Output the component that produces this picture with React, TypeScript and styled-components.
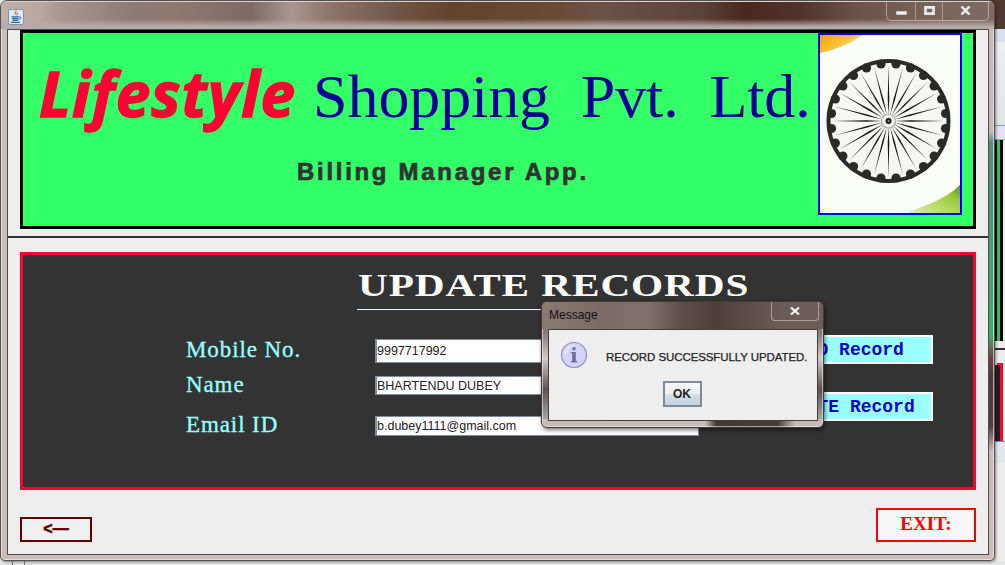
import React from "react";
import styled, { createGlobalStyle } from "styled-components";

const Global = createGlobalStyle`
  html, body { margin: 0; padding: 0; width: 1005px; height: 565px; overflow: hidden; background: #ececec; }
  #root { width: 1005px; height: 565px; }
  * { box-sizing: border-box; }
`;

const Desktop = styled.div`
  position: relative;
  width: 1005px;
  height: 565px;
  overflow: hidden;
  background: #e9e9e9;
`;

/* Parts of the window behind, seen at the right of the frontmost window */
const BehindStrip = styled.div`
  position: absolute;
  left: 989px;
  top: 0;
  width: 16px;
  height: 565px;
  display: flex;
  flex-direction: column;
`;
const Stripe = styled.div<{ $h: number; $bg: string }>`
  height: ${(p) => p.$h}px;
  flex: none;
  background: ${(p) => p.$bg};
`;
const BehindBottom = styled.div`
  position: absolute;
  left: 0;
  top: 561px;
  width: 1005px;
  height: 4px;
  background: linear-gradient(90deg, transparent 12px, #777 12px, #777 13px, transparent 13px, transparent 24px, #777 24px, #777 25px, transparent 25px), #e4e6e6;
`;

const Window = styled.div`
  position: absolute;
  left: 0;
  top: 0;
  width: 995px;
  height: 561px;
  border-radius: 7px 7px 5px 5px;
  border: 1px solid #55504e;
  box-shadow: 1px 1px 3px rgba(0, 0, 0, 0.45), inset 0 0 0 1px rgba(255, 255, 255, 0.55);
  background:
    linear-gradient(180deg, #c9b9b6 0, #c9b9b6 130px, #5f8a72 142px, #3fae68 335px, #7a3a40 358px, #4a3a38 375px, #4e3e3c 425px, #c9bab6 450px, #ccbdb9 100%) right / 6px 100% no-repeat,
    #cbbcb8;
  display: flex;
  flex-direction: column;
  overflow: hidden;
`;

const TitleBar = styled.div`
  height: 28px;
  flex: none;
  padding: 0 5px 0 7px;
  display: flex;
  align-items: flex-start;
  justify-content: space-between;
  background:
    linear-gradient(180deg, rgba(184, 170, 170, 0) 0, rgba(184, 170, 170, 0) 17px, #b9abac 25px, #b5a8a8 28px),
    linear-gradient(90deg, #c0b1a9 0, #b8a79e 40px, #a8968f 60px, #8d7b74 130px, #8f7a70 170px, #7d6a62 250px, #a8968e 290px, #8d7468 330px, #6f5546 400px, #63442a 450px, #64482f 520px, #6a4a34 550px, #6b5246 600px, #5c4238 700px, #48291c 745px, #50342d 800px, #6d5449 860px, #7a645a 930px, #7d6a61 995px);
  border-top: 1px solid #d8d2cc;
`;

const JavaIcon = styled.svg`
  width: 16px;
  height: 16px;
  margin-top: 7px;
`;

const CaptionButtons = styled.div`
  display: flex;
  height: 20px;
  width: 103px;
  margin-top: -1px;
  border: 1px solid rgba(225, 215, 210, 0.55);
  border-top: none;
  border-radius: 0 0 5px 5px;
`;
const CaptionButton = styled.div<{ $w: number }>`
  width: ${(p) => p.$w}px;
  display: flex;
  align-items: center;
  justify-content: center;
  border-left: 1px solid rgba(225, 215, 210, 0.45);
  &:first-child { border-left: none; }
`;

const Pane = styled.div`
  margin: 0 5px 0 6px;
  height: 526px;
  flex: none;
  background: #eeeeee;
  border: 1px solid #4d4d4d;
  display: flex;
  flex-direction: column;
  padding: 0 12px 0 12px;
`;

const Banner = styled.header`
  height: 199px;
  flex: none;
  border: 3px solid #000;
  background: #33ff66;
  display: flex;
  position: relative;
`;
const BannerText = styled.div`
  flex: 1;
  min-width: 0;
  display: flex;
  flex-direction: column;
  padding: 16px 0 0 16px;
`;
const BrandLine = styled.div`
  display: flex;
  align-items: baseline;
  height: 88px;
  white-space: pre;
`;
const Brand = styled.span`
  font-family: "Open Sans", sans-serif;
  font-style: italic;
  font-weight: 700;
  font-size: 62px;
  letter-spacing: 1px;
  line-height: 88px;
  color: #ff0033;
  margin-right: 17px;
  -webkit-text-stroke: 1.4px #ff0033;
`;
const Company = styled.span`
  font-family: "Liberation Serif", serif;
  font-size: 62px;
  letter-spacing: -0.1px;
  line-height: 88px;
  color: #000099;
`;
const AppName = styled.div`
  font-family: "Liberation Sans", sans-serif;
  font-weight: 700;
  font-size: 24px;
  letter-spacing: 2.7px;
  color: #333333;
  margin: 21px 0 0 258px;
  line-height: 28px;
  -webkit-text-stroke: 0.7px #333333;
`;
const Emblem = styled.svg`
  width: 144px;
  height: 182px;
  flex: none;
  margin: 0 11px 0 0;
  border: 2px solid #0000ee;
  display: block;
`;

const Separator = styled.hr`
  height: 2px;
  border: none;
  background: #333;
  margin: 7px -12px 14px -12px;
  flex: none;
`;

const Panel = styled.section`
  height: 238px;
  flex: none;
  border: 3px solid #ff0033;
  background: #333333;
  display: flex;
  flex-direction: column;
`;
const PanelTitle = styled.h1`
  margin: 13px 0 0 334px;
  width: 388px;
  height: 42px;
  border-bottom: 1px solid #e8f0ff;
  font-family: "Liberation Serif", serif;
  font-weight: 700;
  font-size: 31px;
  line-height: 36px;
  color: #ffffff;
  white-space: nowrap;
`;
const PanelTitleText = styled.span`
  display: inline-block;
  transform: scaleX(1.33);
  transform-origin: left center;
  margin-left: 1px;
  letter-spacing: 0.7px;
`;

const FormArea = styled.div`
  display: flex;
  padding-left: 163px;
  margin-top: 29px;
`;
const FieldRows = styled.div`
  width: 513px;
  flex: none;
  display: flex;
  flex-direction: column;
`;
const FieldRow = styled.div<{ $h: number; $mt: number }>`
  display: flex;
  align-items: center;
  height: ${(p) => p.$h}px;
  margin-top: ${(p) => p.$mt}px;
`;
const Label = styled.label`
  width: 189px;
  flex: none;
  padding-bottom: 2px;
  font-family: "Liberation Serif", serif;
  font-size: 23px;
  letter-spacing: 0.9px;
  -webkit-text-stroke: 0.3px #99ffff;
  color: #99ffff;
  white-space: nowrap;
`;
const Field = styled.div`
  width: 324px;
  height: 100%;
  flex: none;
  display: flex;
  align-items: center;
  padding-left: 0;
  background: #fff;
  border: 1px solid #7d8ea0;
  border-width: 1px 1px 1px 2px;
  font-family: "Liberation Sans", sans-serif;
  font-size: 12.5px;
  color: #222;
  white-space: nowrap;
`;
const Actions = styled.div`
  margin: -4px 0 0 57px;
  display: flex;
  flex-direction: column;
  gap: 28px;
`;
const ActionButton = styled.button`
  width: 177px;
  height: 29px;
  padding: 1px 0 0;
  border: 2px solid #ffffff;
  background: #99ffff;
  font-family: "Liberation Mono", monospace;
  font-weight: 700;
  font-size: 18px;
  color: #0000cc;
  white-space: nowrap;
`;

const Footer = styled.div`
  flex: 1;
  display: flex;
  justify-content: space-between;
  align-items: flex-end;
  padding-bottom: 12px;
`;
const BackButton = styled.button`
  width: 72px;
  height: 25px;
  padding: 0 0 2px;
  border: 2px solid #660000;
  background: #f0f0f0;
  display: flex;
  align-items: center;
  justify-content: center;
  font-family: "Liberation Sans", sans-serif;
  font-weight: 700;
  font-size: 16px;
  line-height: 18px;
  letter-spacing: 0;
  -webkit-text-stroke: 0.6px #660000;
  color: #660000;
`;
const ExitButton = styled.button`
  width: 100px;
  height: 34px;
  padding: 0 0 2px;
  border: 2px solid #ff0000;
  background: #f7f7f7;
  font-family: "Liberation Serif", serif;
  font-weight: 700;
  font-size: 19px;
  color: #ff0000;
`;

const Dialog = styled.div`
  position: absolute;
  left: 541px;
  top: 301px;
  width: 283px;
  height: 127px;
  border: 1px solid #3e3a3a;
  border-radius: 6px;
  box-shadow: 1px 2px 4px rgba(0, 0, 0, 0.55), inset 0 0 0 1px rgba(255, 255, 255, 0.5);
  background:
    linear-gradient(90deg, #c9bbb6 0, #cabcb8 58%, #443733 62%, #4a3c38 84%, #c8bab6 90%, #c8bab6 100%) bottom / 100% 8px no-repeat,
    linear-gradient(180deg, #6b5a54 0, #8a7c78 25%, #cfcac8 45%, #5c5250 70%, #b9bcbc 100%);
  display: flex;
  flex-direction: column;
  overflow: hidden;
`;
const DialogTitleBar = styled.div`
  height: 27px;
  flex: none;
  display: flex;
  justify-content: space-between;
  align-items: flex-start;
  padding: 0 4px 0 7px;
  background: linear-gradient(90deg, #8a7a70 0, #7d6c65 20%, #80706a 38%, #5d4c47 50%, #4e3d38 62%, #6c5c56 85%, #6c5d58 100%);
`;
const DialogCaption = styled.span`
  font-family: "Liberation Sans", sans-serif;
  font-size: 12px;
  line-height: 26px;
  color: #111;
`;
const DialogClose = styled.div`
  width: 48px;
  height: 19px;
  border: 1px solid rgba(225, 215, 210, 0.55);
  border-top: none;
  border-radius: 0 0 4px 4px;
  display: flex;
  align-items: center;
  justify-content: center;
`;
const DialogBody = styled.div`
  margin: 0 5px 0 6px;
  height: 92px;
  flex: none;
  background: #eeeeee;
  border: 1px solid #3e3e3e;
  display: flex;
  flex-direction: column;
`;
const MessageRow = styled.div`
  display: flex;
  align-items: flex-start;
  padding: 11px 0 0 11px;
  height: 51px;
`;
const InfoIcon = styled.svg`
  width: 28px;
  height: 28px;
  flex: none;
`;
const MessageText = styled.span`
  margin: 10px 0 0 18px;
  font-family: "Liberation Sans", sans-serif;
  font-size: 11.5px;
  letter-spacing: -0.09px;
  -webkit-text-stroke: 0.25px #222;
  color: #222;
  white-space: nowrap;
`;
const OkButton = styled.button`
  align-self: center;
  width: 39px;
  height: 26px;
  padding: 0;
  margin-left: -2px;
  border: 2px solid #7a8a9a;
  background: linear-gradient(180deg, #f4f6f8 0, #eef1f4 45%, #d4dde6 55%, #c4d2df 100%);
  font-family: "Liberation Sans", sans-serif;
  font-weight: 700;
  font-size: 12px;
  color: #222;
`;

function Chakra() {
  const cx = 68.5;
  const cy = 86;
  const spokes = Array.from({ length: 24 }, (_, i) => (i * Math.PI) / 12);
  const pt = (r: number, a: number) => `${(cx + r * Math.sin(a)).toFixed(2)},${(cy - r * Math.cos(a)).toFixed(2)}`;
  return (
    <Emblem viewBox="0 0 140 178" preserveAspectRatio="none">
      <defs>
        <linearGradient id="saffron" x1="0" y1="0" x2="1" y2="0.6">
          <stop offset="0" stopColor="#f5a400" />
          <stop offset="1" stopColor="#ffd870" />
        </linearGradient>
        <linearGradient id="leaf" x1="0" y1="1" x2="1" y2="0">
          <stop offset="0" stopColor="#dcefb0" />
          <stop offset="0.7" stopColor="#9ccb3c" />
          <stop offset="1" stopColor="#5e8f20" />
        </linearGradient>
      </defs>
      <rect width="140" height="178" fill="#fbfef6" />
      <path d="M0 0H42C30 9 15 15 0 18Z" fill="url(#saffron)" />
      <path d="M88 178C105 170 125 165 140 150V178Z" fill="url(#leaf)" />
      <circle cx={cx} cy={cy} r="62" fill="#2a2a28" />
      <circle cx={cx} cy={cy} r="58" fill="#f6f7f4" />
      {spokes.map((a, i) => {
        const m = a + Math.PI / 24;
        const [x, y] = pt(57.5, m).split(",");
        return <circle key={`b${i}`} cx={x} cy={y} r="4.6" fill="#2a2a28" />;
      })}
      {spokes.map((a, i) => (
        <polygon
          key={`s${i}`}
          points={`${pt(6, a)} ${pt(22, a - 0.035)} ${pt(56, a)} ${pt(22, a + 0.035)}`}
          fill="#141414"
        />
      ))}
      <circle cx={cx} cy={cy} r="7" fill="none" stroke="#a4a4a2" strokeWidth="1.2" />
      <circle cx={cx} cy={cy} r="5" fill="#f4f5f2" />
      <circle cx={cx} cy={cy} r="3" fill="#1a1a1a" />
      <circle cx={cx} cy={cy} r="1" fill="#999" />
    </Emblem>
  );
}

const WhiteGlyph = styled.svg<{ $mt?: number }>`
  display: block;
  margin-top: ${(p) => p.$mt ?? 0}px;
`;

export default function App() {
  return (
    <Desktop>
      <Global />
      <BehindStrip>
        <Stripe $h={29} $bg="#4f3a30" />
        <Stripe $h={13} $bg="#dcdfee" />
        <Stripe $h={83} $bg="linear-gradient(180deg,#eceef0,#e2e5e8)" />
        <Stripe $h={1} $bg="#7da0c4" />
        <Stripe $h={13} $bg="#e4e2f2" />
        <Stripe $h={1} $bg="#f0a030" />
        <Stripe $h={201} $bg="linear-gradient(90deg,#000 0,#000 8px,#28c85a 8px,#28c85a 11px,#000 11px,#000 14px,#ececec 14px)" />
        <Stripe $h={7} $bg="#ececec" />
        <Stripe $h={2} $bg="#333" />
        <Stripe $h={13} $bg="#ececec" />
        <Stripe $h={2} $bg="linear-gradient(90deg,#ececec 8px,#ff0033 8px,#ff0033 14px,#ececec 14px)" />
        <Stripe $h={76} $bg="linear-gradient(90deg,#222 0,#222 11px,#ff0033 11px,#ff0033 14px,#ececec 14px)" />
        <Stripe $h={1} $bg="#6d96bd" />
        <Stripe $h={21} $bg="#dfe8ef" />
        <Stripe $h={103} $bg="#ededed" />
      </BehindStrip>
      <BehindBottom />
      <Window>
        <TitleBar>
          <JavaIcon viewBox="0 0 16 16">
            <rect x="0.5" y="0.5" width="15" height="15" rx="1.5" fill="#dfe9f3" stroke="#7f95ac" />
            <path d="M8 1.5C10 3.4 6.4 4.4 7.6 6.8C5.8 5.2 6.4 3.4 8 1.5ZM10.2 3.4C10.8 5 8.8 5.4 9 7C7.9 6 8.6 4.2 10.2 3.4Z" fill="#e8560c" />
            <path d="M3.5 7.8H11M4 9.6H10.4M4.6 11.4H9.8M3 13.4H12" stroke="#2f6a9e" strokeWidth="1.2" fill="none" />
            <path d="M11 7.8C13.6 7.6 13.4 10.4 10.4 10.8" stroke="#2f6a9e" fill="none" />
          </JavaIcon>
          <CaptionButtons>
            <CaptionButton $w={29}>
              <WhiteGlyph $mt={5} width="11" height="4" viewBox="0 0 11 4">
                <rect width="11" height="4" fill="#eef2f6" stroke="#6c6c6c" strokeWidth="0.6" />
              </WhiteGlyph>
            </CaptionButton>
            <CaptionButton $w={27}>
              <WhiteGlyph width="11" height="9" viewBox="0 0 12 10">
                <path d="M0 0H12V10H0ZM3 3V7H9V3Z" fill="#e6ebf0" fillRule="evenodd" />
              </WhiteGlyph>
            </CaptionButton>
            <CaptionButton $w={47}>
              <WhiteGlyph width="11" height="9" viewBox="0 0 12 10">
                <path d="M1.5 0.5L10.5 9.5M10.5 0.5L1.5 9.5" stroke="#e8ecf0" strokeWidth="2.8" />
              </WhiteGlyph>
            </CaptionButton>
          </CaptionButtons>
        </TitleBar>
        <Pane>
          <Banner>
            <BannerText>
              <BrandLine>
                <Brand>Lifestyle</Brand>
                <Company>{"Shopping  Pvt.  Ltd."}</Company>
              </BrandLine>
              <AppName>Billing Manager App.</AppName>
            </BannerText>
            <Chakra />
          </Banner>
          <Separator />
          <Panel>
            <PanelTitle>
              <PanelTitleText>UPDATE RECORDS</PanelTitleText>
            </PanelTitle>
            <FormArea>
              <FieldRows>
                <FieldRow $h={24} $mt={0}>
                  <Label>Mobile No.</Label>
                  <Field>9997717992</Field>
                </FieldRow>
                <FieldRow $h={19} $mt={13}>
                  <Label>Name</Label>
                  <Field>BHARTENDU DUBEY</Field>
                </FieldRow>
                <FieldRow $h={20} $mt={21}>
                  <Label>Email ID</Label>
                  <Field>b.dubey1111@gmail.com</Field>
                </FieldRow>
              </FieldRows>
              <Actions>
                <ActionButton>FIND Record</ActionButton>
                <ActionButton>UPDATE Record</ActionButton>
              </Actions>
            </FormArea>
          </Panel>
          <Footer>
            <BackButton>&lt;—</BackButton>
            <ExitButton>EXIT:</ExitButton>
          </Footer>
        </Pane>
      </Window>
      <Dialog>
        <DialogTitleBar>
          <DialogCaption>Message</DialogCaption>
          <DialogClose>
            <WhiteGlyph width="10" height="8" viewBox="0 0 10 8">
              <path d="M1 0.5L9 7.5M9 0.5L1 7.5" stroke="#f2f4f6" strokeWidth="2.2" />
            </WhiteGlyph>
          </DialogClose>
        </DialogTitleBar>
        <DialogBody>
          <MessageRow>
            <InfoIcon viewBox="0 0 28 28">
              <circle cx="14" cy="14" r="12.5" fill="#d3d3f8" stroke="#8c8cc4" strokeWidth="1.2" />
              <path d="M4 12C6 6 11 3.5 16 4C11 5 7 8 6 14Z" fill="#f2f2ff" opacity="0.8" />
              <rect x="12.2" y="11" width="3.6" height="10" fill="#6c6ca4" />
              <rect x="10.8" y="20" width="6.4" height="1.4" fill="#6c6ca4" />
              <rect x="10.8" y="11" width="3" height="1.2" fill="#6c6ca4" />
              <circle cx="14" cy="7.8" r="1.7" fill="#6c6ca4" />
            </InfoIcon>
            <MessageText>RECORD SUCCESSFULLY UPDATED.</MessageText>
          </MessageRow>
          <OkButton>OK</OkButton>
        </DialogBody>
      </Dialog>
    </Desktop>
  );
}
